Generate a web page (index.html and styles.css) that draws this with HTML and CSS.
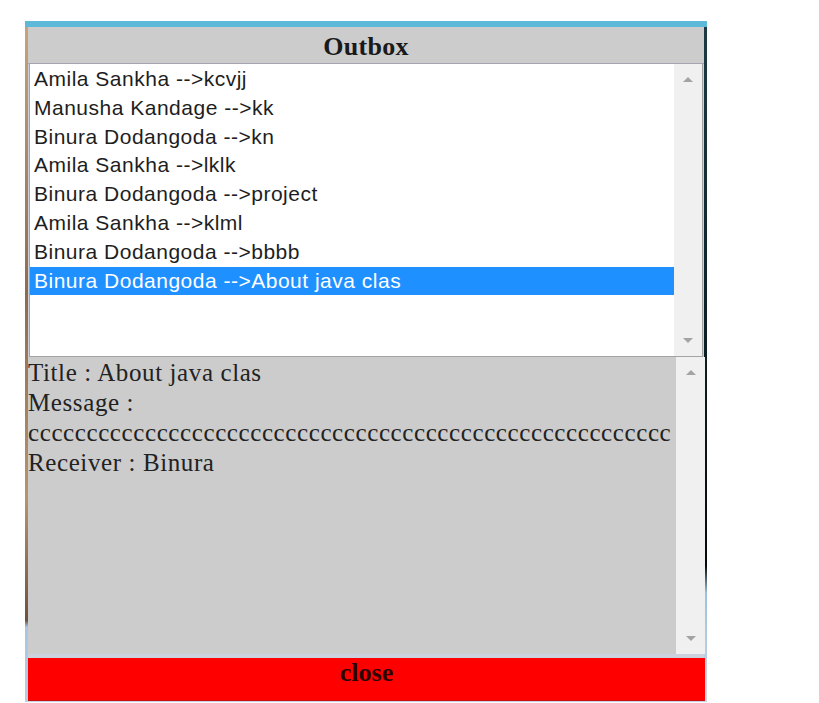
FILE: index.html
```html
<!DOCTYPE html>
<html lang="en">
<head>
<meta charset="utf-8">
<title>Outbox</title>
<link rel="stylesheet" href="styles.css">
</head>
<body>
<div class="panel">
  <div class="topbar"></div>
  <div class="header">Outbox</div>
  <div class="list">
    <ul class="items">
      <li class="item">Amila Sankha --&gt;kcvjj</li>
      <li class="item">Manusha Kandage --&gt;kk</li>
      <li class="item">Binura Dodangoda --&gt;kn</li>
      <li class="item">Amila Sankha --&gt;lklk</li>
      <li class="item">Binura Dodangoda --&gt;project</li>
      <li class="item">Amila Sankha --&gt;klml</li>
      <li class="item">Binura Dodangoda --&gt;bbbb</li>
      <li class="item selected">Binura Dodangoda --&gt;About java clas</li>
    </ul>
    <div class="scrollbar list-scroll">
      <span class="arrow up"></span>
      <span class="arrow down"></span>
    </div>
  </div>
  <div class="message">
    <div class="text">
      <div class="line">Title : About java clas</div>
      <div class="line">Message : ccccccccccccccccccccccccccccccccccccccccccccccccccccccc</div>
      <div class="line">Receiver : Binura</div>
    </div>
    <div class="scrollbar msg-scroll">
      <span class="arrow up"></span>
      <span class="arrow down"></span>
    </div>
  </div>
  <div class="close">close</div>
</div>
</body>
</html>
```

FILE: styles.css
```css
html, body {
  margin: 0;
  padding: 0;
  background: #ffffff;
}

.panel {
  width: 682px;
  height: 681px;
  margin: 21px 0 0 25px;
  display: flex;
  flex-direction: column;
  background:
    linear-gradient(#c9a47c 0%, #8d6b4d 40%, #b8936d 70%, #6d5240 88%, #a9c6de 89%, #b8cde2 100%) left top / 3px 100% no-repeat,
    linear-gradient(#1d3b44 0%, #0d2027 45%, #050a0c 80%, #9cc2de 84%, #cdd9e6 100%) right top / 3px 100% no-repeat,
    #ccd2dd;
}

.topbar {
  height: 6px;
  background: #5cbad8;
}

.header {
  margin: 0 3px;
  height: 32px;
  padding-top: 4px;
  line-height: 32px;
  background: #cccccc;
  border-bottom: 1px solid #a4a4b2;
  text-align: center;
  font-family: "Liberation Serif", "Times New Roman", serif;
  font-weight: bold;
  font-size: 26px;
  letter-spacing: 0.3px;
  color: #1a1a1a;
}

.list {
  margin: 0 4px;
  height: 292px;
  border: 1px solid #a3a3a3;
  border-top: none;
  background: #ffffff;
  display: flex;
}

.items {
  flex: 1;
  margin: 0;
  padding: 1px 0 0 0;
  list-style: none;
  font-family: "Liberation Sans", Arial, sans-serif;
  font-size: 21px;
  letter-spacing: 0.5px;
  color: #1e1e1e;
}

.item {
  height: 28.8px;
  line-height: 28.8px;
  padding-left: 4px;
  white-space: nowrap;
}

.item.selected {
  background: #1e90ff;
  color: #ffffff;
}

.scrollbar {
  width: 28px;
  background: #f0f0f0;
  display: flex;
  flex-direction: column;
  justify-content: space-between;
  align-items: center;
  padding: 13px 0;
  box-sizing: border-box;
}

.msg-scroll {
  width: 29px;
}

.arrow {
  width: 0;
  height: 0;
  border-left: 5px solid transparent;
  border-right: 5px solid transparent;
}

.arrow.up {
  border-bottom: 5px solid #a3a3a3;
}

.arrow.down {
  border-top: 5px solid #a3a3a3;
}

.message {
  margin: 0 2px 0 3px;
  height: 297px;
  background: #cccccc;
  display: flex;
}

.text {
  flex: 1;
  padding-top: 1px;
  overflow: hidden;
  font-family: "Liberation Serif", "Times New Roman", serif;
  font-size: 25px;
  letter-spacing: 0.6px;
  line-height: 30px;
  color: #222222;
}

.close {
  margin: 4px 2px 0 3px;
  height: 42px;
  line-height: 30px;
  background: #ff0000;
  border-bottom: 1px solid #c81010;
  text-align: center;
  font-family: "Liberation Serif", "Times New Roman", serif;
  font-weight: bold;
  font-size: 26px;
  color: #2a0505;
}
```
